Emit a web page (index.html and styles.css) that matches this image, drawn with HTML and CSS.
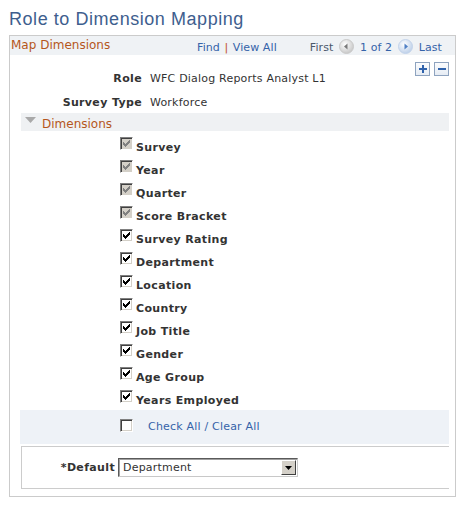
FILE: index.html
```html
<!DOCTYPE html>
<html>
<head>
<meta charset="utf-8">
<link rel="stylesheet" href="styles.css">
</head>
<body>
<svg class="defs" width="0" height="0">
  <defs>
    <symbol id="chk" viewBox="0 0 13 13">
      <path d="M3 5h1v3H3z M4 6h1v3H4z M5 7h1v3H5z M6 6h1v3H6z M7 5h1v3H7z M8 4h1v3H8z M9 3h1v3H9z"/>
    </symbol>
  </defs>
</svg>
<h1 class="title">Role to Dimension Mapping</h1>
<div class="box">
  <div class="box-head">
    <span class="box-title">Map Dimensions</span>
    <div class="nav">
      <a class="link">Find</a><span class="sep">|</span><a class="link">View All</a>
      <span class="first">First</span>
      <svg class="circ" width="15" height="15" viewBox="0 0 15 15">
        <defs><radialGradient id="gg" cx="40%" cy="35%" r="70%"><stop offset="0" stop-color="#ffffff"/><stop offset="1" stop-color="#c4c4c4"/></radialGradient></defs>
        <circle cx="7.5" cy="7.5" r="7" fill="url(#gg)" stroke="#c9c9c9"/>
        <path d="M5 7.5 L8.5 4.5 L8.5 10.5 Z" fill="#7a7a7a"/>
      </svg>
      <span class="count">1 of 2</span>
      <svg class="circ" width="15" height="15" viewBox="0 0 15 15">
        <defs><radialGradient id="gb" cx="40%" cy="35%" r="70%"><stop offset="0" stop-color="#ffffff"/><stop offset="1" stop-color="#b9cde8"/></radialGradient></defs>
        <circle cx="7.5" cy="7.5" r="7" fill="url(#gb)" stroke="#c3d3ea"/>
        <path d="M10 7.5 L6.5 4.5 L6.5 10.5 Z" fill="#4f7fc4"/>
      </svg>
      <a class="link">Last</a>
    </div>
  </div>
  <div class="top">
    <div class="fields">
      <div class="lbl">Role</div><div class="val">WFC Dialog Reports Analyst L1</div>
      <div class="lbl">Survey Type</div><div class="val">Workforce</div>
    </div>
    <div class="btns">
      <span class="btn"><svg width="12" height="12" viewBox="0 0 12 12"><path d="M2 5h8v2H2z M5 2h2v8H5z" fill="#2f62ac"/></svg></span>
      <span class="btn"><svg width="12" height="12" viewBox="0 0 12 12"><path d="M2 5h8v2H2z" fill="#2f62ac"/></svg></span>
    </div>
  </div>
  <div class="band">
    <svg class="tri" width="11" height="7" viewBox="0 0 11 7"><path d="M0 0H11L5.5 6Z" fill="#a9a9a9"/></svg>
    <span class="band-title">Dimensions</span>
  </div>
  <div class="list">
    <div class="row"><span class="cb dis"><svg><use href="#chk"/></svg></span><span class="dim">Survey</span></div>
    <div class="row"><span class="cb dis"><svg><use href="#chk"/></svg></span><span class="dim">Year</span></div>
    <div class="row"><span class="cb dis"><svg><use href="#chk"/></svg></span><span class="dim">Quarter</span></div>
    <div class="row"><span class="cb dis"><svg><use href="#chk"/></svg></span><span class="dim">Score Bracket</span></div>
    <div class="row"><span class="cb"><svg><use href="#chk"/></svg></span><span class="dim">Survey Rating</span></div>
    <div class="row"><span class="cb"><svg><use href="#chk"/></svg></span><span class="dim">Department</span></div>
    <div class="row"><span class="cb"><svg><use href="#chk"/></svg></span><span class="dim">Location</span></div>
    <div class="row"><span class="cb"><svg><use href="#chk"/></svg></span><span class="dim">Country</span></div>
    <div class="row"><span class="cb"><svg><use href="#chk"/></svg></span><span class="dim">Job Title</span></div>
    <div class="row"><span class="cb"><svg><use href="#chk"/></svg></span><span class="dim">Gender</span></div>
    <div class="row"><span class="cb"><svg><use href="#chk"/></svg></span><span class="dim">Age Group</span></div>
    <div class="row"><span class="cb"><svg><use href="#chk"/></svg></span><span class="dim">Years Employed</span></div>
  </div>
  <div class="checkall">
    <span class="cb empty"></span>
    <a class="link ca">Check All / Clear All</a>
  </div>
  <div class="defbox">
    <span class="deflbl">*Default</span>
    <div class="select">
      <span class="seltext">Department</span>
      <span class="arrow"><svg width="7" height="4" viewBox="0 0 7 4"><path d="M0 0H7L3.5 4Z" fill="#000"/></svg></span>
    </div>
  </div>
</div>
</body>
</html>
```

FILE: styles.css
```css
html, body {
  margin: 0;
  padding: 0;
  background: #ffffff;
}
body {
  font-family: "DejaVu Sans", Verdana, sans-serif;
  font-size: 11px;
  letter-spacing: 0.2px;
  color: #333333;
}
.defs {
  position: absolute;
  width: 0;
  height: 0;
}
.title {
  margin: 0 0 6px 9px;
  padding-top: 9px;
  font-family: "Liberation Sans", Arial, sans-serif;
  font-weight: normal;
  font-size: 18px;
  letter-spacing: 0.55px;
  line-height: 20px;
  color: #3e5e8e;
}
.box {
  margin-left: 9px;
  width: 447px;
  box-sizing: border-box;
  border: 1px solid #cbcbcb;
  padding-bottom: 7px;
}
.box-head {
  display: flex;
  align-items: flex-start;
  height: 19px;
  background: #eff2f5;
}
.box-title {
  padding-left: 1px;
  font-size: 12px;
  letter-spacing: 0;
  line-height: 19px;
  color: #b5561c;
}
.nav {
  margin-left: auto;
  padding-right: 13px;
  display: flex;
  align-items: center;
  height: 19px;
  margin-top: 2px;
  font-size: 11px;
  letter-spacing: 0.1px;
}
.link {
  color: #3563a9;
  text-decoration: none;
}
.sep {
  color: #c0501a;
  margin: 0 4.5px 0 4.5px;
}
.first {
  margin-left: 33px;
  color: #4b586b;
}
.count {
  color: #3563a9;
}
.circ {
  margin: -3px 5.75px 0 5.75px;
}
.top {
  display: flex;
  align-items: flex-start;
  padding-right: 6px;
}
.fields {
  flex: 1;
  display: grid;
  grid-template-columns: 132px auto;
  column-gap: 8px;
  row-gap: 4px;
  padding-top: 14px;
  line-height: 20px;
}
.lbl {
  font-weight: bold;
  letter-spacing: 0.35px;
  text-align: right;
}
.val {
  color: #333333;
}
.btns {
  display: flex;
  gap: 4px;
  margin-top: 7px;
}
.btn {
  width: 15px;
  height: 14px;
  box-sizing: border-box;
  border: 1px solid #8ea3bf;
  background: linear-gradient(#fbfcfe, #e6ecf4);
  display: flex;
  align-items: center;
  justify-content: center;
}
.band {
  display: flex;
  align-items: flex-start;
  height: 18px;
  margin: 0 6px 0 11px;
  background: #eff1f3;
}
.tri {
  margin: 4px 0 0 4px;
}
.band-title {
  margin: 5px 0 0 6px;
  font-size: 12px;
  letter-spacing: 0;
  line-height: 13px;
  color: #b5561c;
}
.list {
  padding-top: 4px;
}
.row {
  display: flex;
  align-items: flex-start;
  height: 23px;
  padding-left: 110px;
}
.cb {
  width: 13px;
  height: 13px;
  box-sizing: border-box;
  border: 1px solid;
  border-color: #808080 #ffffff #ffffff #808080;
  box-shadow: inset 1px 1px 0 #404040, inset -1px -1px 0 #d4d0c8;
  background: #ffffff;
  margin-top: 2px;
  flex: none;
  position: relative;
}
.cb svg {
  position: absolute;
  left: -1px;
  top: -1px;
  width: 13px;
  height: 13px;
  fill: #000000;
  shape-rendering: crispEdges;
}
.cb.dis {
  background: #d4d0c8;
}
.cb.dis svg {
  fill: #808080;
}
.dim {
  font-weight: bold;
  letter-spacing: 0.35px;
  margin-left: 3px;
  padding-top: 1px;
  line-height: 23px;
}
.checkall {
  display: flex;
  align-items: flex-start;
  height: 34px;
  margin: -1px 6px 0 10px;
  padding-left: 100px;
  background: #eef2f7;
}
.cb.empty {
  margin-top: 9px;
}
.ca {
  margin-left: 15px;
  line-height: 34px;
  padding-top: 0;
}
.defbox {
  display: flex;
  align-items: center;
  margin: 2px 6px 0 11px;
  height: 43px;
  box-sizing: border-box;
  border: 1px solid #cccccc;
  border-right: none;
}
.deflbl {
  width: 93px;
  text-align: right;
  font-weight: bold;
  letter-spacing: 0.35px;
  margin-right: 3px;
}
.select {
  width: 180px;
  height: 19px;
  box-sizing: border-box;
  border: 1px solid;
  border-color: #5a5a5a #c8c8c8 #c8c8c8 #5a5a5a;
  box-shadow: inset 1px 1px 0 #a0a0a0;
  display: flex;
  align-items: center;
  background: #ffffff;
}
.seltext {
  flex: 1;
  padding-left: 4px;
  color: #333333;
  font-size: 11px;
}
.arrow {
  width: 15px;
  height: 15px;
  box-sizing: border-box;
  margin-right: 1px;
  border: 1px solid;
  border-color: #ffffff #404040 #404040 #ffffff;
  background: #d4d0c8;
  display: flex;
  align-items: center;
  justify-content: center;
}
```
